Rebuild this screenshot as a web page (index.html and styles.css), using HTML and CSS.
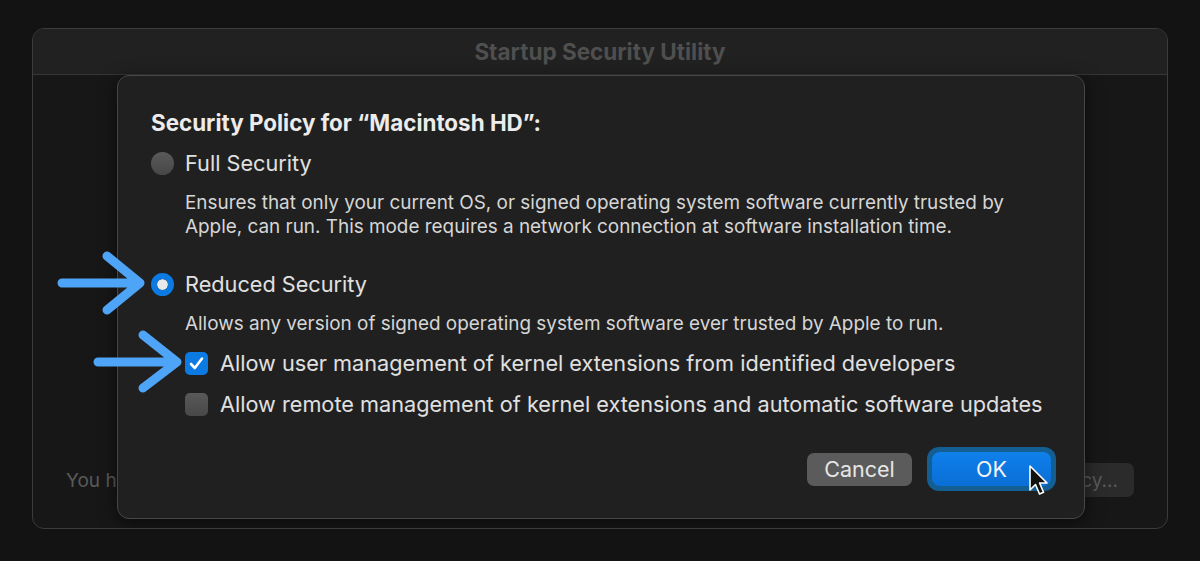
FILE: index.html
```html
<!DOCTYPE html>
<html>
  <head>
    <title>Startup Security Utility</title>
    <link rel="stylesheet" href="styles.css">
  </head>
  <body>
    <div class="screen">
      <div class="window">
        <div class="titlebar">Startup Security Utility</div>
        <div class="window-body">
          <div class="footer">
            <span class="footer-text">You have Reduced Security set.</span>
            <button class="ghost-btn">Policy...</button>
          </div>

          <!-- sheet sits on top of the window content -->
          <div class="sheet">
            <h2 class="sheet-title">Security Policy for “Macintosh HD”:</h2>

            <div class="option">
              <span class="radio"></span>
              <span class="option-label">Full Security</span>
            </div>
            <p class="desc first-desc">Ensures that only your current OS, or signed operating system software currently trusted by<br>Apple, can run. This mode requires a network connection at software installation time.</p>

            <div class="option reduced">
              <span class="radio on"></span>
              <span class="option-label">Reduced Security</span>
            </div>
            <p class="desc">Allows any version of signed operating system software ever trusted by Apple to run.</p>

            <div class="check-row">
              <span class="box on">
                <svg width="23" height="23" viewBox="0 0 23 23"><path d="M6 12 L9.8 16 L17 6.5" fill="none" stroke="#fff" stroke-width="2.6" stroke-linecap="round" stroke-linejoin="round"/></svg>
              </span>
              <span class="check-label">Allow user management of kernel extensions from identified developers</span>
            </div>
            <div class="check-row">
              <span class="box"></span>
              <span class="check-label">Allow remote management of kernel extensions and automatic software updates</span>
            </div>

            <div class="actions">
              <button class="btn cancel">Cancel</button>
              <div class="focus-ring"><button class="btn ok">OK</button></div>
            </div>
          </div>
        </div>
      </div>

      <svg class="marks" width="1200" height="561" viewBox="0 0 1200 561">
        <g fill="none" stroke="#4ea4f6" stroke-width="9" stroke-linecap="round" stroke-linejoin="round">
          <path d="M62 283 H139 M107 256 L140 283 L107 310"/>
          <path d="M98 362 H176 M143 335 L177 362 L143 388"/>
        </g>
      </svg>

      <svg class="cursor" width="24" height="34" viewBox="0 0 24 34">
        <path d="M2 1 L2 25 L7.5 19.5 L11.5 29 L15.5 27.3 L11.6 18 L19 18 Z" fill="#111" stroke="#fff" stroke-width="1.6" stroke-linejoin="round"/>
      </svg>
    </div>
  </body>
</html>
```

FILE: styles.css
```css
body {
  margin: 0;
  background-color: #131313;
  font-family: Inter, "Noto Sans", sans-serif;
}

.screen {
  position: relative;
  width: 1200px;
  height: 561px;
  padding-top: 28px;
  box-sizing: border-box;
}

.window {
  margin-left: 32px;
  width: 1136px;
  height: 501px;
  box-sizing: border-box;
  border: 1px solid #3c3c3c;
  border-radius: 12px;
  background-color: #171717;
  overflow: hidden;
  display: flex;
  flex-direction: column;
}

.titlebar {
  height: 45px;
  flex-shrink: 0;
  background-color: #212121;
  border-bottom: 1px solid #363636;
  color: #4f4f4f;
  font-size: 22.5px;
  font-weight: 700;
  display: flex;
  align-items: center;
  justify-content: center;
}

.window-body {
  position: relative;
  flex: 1;
  display: flex;
  flex-direction: column;
  justify-content: flex-end;
}

.footer {
  display: flex;
  align-items: center;
  justify-content: space-between;
  padding: 0 33px 31px 33px;
}

.footer-text {
  color: #5a5a5a;
  font-size: 19px;
}

.ghost-btn {
  background-color: #2b2b2b;
  color: #5a5a5a;
  font-family: inherit;
  font-size: 19px;
  border: none;
  border-radius: 7px;
  height: 34px;
  padding: 0 16px;
}

.sheet {
  position: absolute;
  top: 0;
  left: 84px;
  width: 968px;
  height: 444px;
  box-sizing: border-box;
  background-color: #202020;
  border: 1px solid #474747;
  border-radius: 12px;
  box-shadow: 0 4px 18px rgba(0, 0, 0, 0.55);
  padding: 35px 28px 0 33px;
}

.sheet-title {
  margin: 0;
  color: #ececec;
  font-size: 22.4px;
  font-weight: 700;
  line-height: 24px;
}

.option {
  display: flex;
  align-items: center;
  height: 28px;
  margin-top: 14px;
}

.option.reduced {
  margin-top: 31px;
}

.radio {
  width: 23px;
  height: 23px;
  border-radius: 50%;
  background: linear-gradient(#5a5a5a, #474747);
  margin-right: 11px;
  flex-shrink: 0;
  box-sizing: border-box;
}

.radio.on {
  border: 6.5px solid #0b7be3;
  background-clip: padding-box;
  background-color: #e9e9e9;
  background-image: none;
}

.option-label {
  color: #e0e0e0;
  font-size: 21.7px;
}

.desc {
  margin: 14px 0 0 34px;
  color: #d6d6d6;
  font-size: 18.9px;
  line-height: 24px;
}

.first-desc {
  margin-top: 14px;
}

.desc + .check-row {
  margin-top: 13px;
}

.check-row {
  display: flex;
  align-items: center;
  height: 28px;
  margin: 13px 0 0 34px;
}

.box {
  width: 23px;
  height: 23px;
  border-radius: 5px;
  background: linear-gradient(#595959, #484848);
  margin-right: 12px;
  flex-shrink: 0;
}

.box.on {
  background: #0b7be3;
}

.box svg {
  display: block;
}

.check-label {
  color: #e0e0e0;
  font-size: 21.7px;
}

.actions {
  display: flex;
  align-items: center;
  justify-content: flex-end;
  gap: 15px;
  margin-top: 29px;
}

.btn {
  font-family: inherit;
  font-size: 21.5px;
  border: none;
  cursor: pointer;
}

.cancel {
  width: 105px;
  height: 33px;
  border-radius: 7px;
  background-color: #5b5b5b;
  color: #e6e6e6;
}

.focus-ring {
  padding: 5px;
  border-radius: 12px;
  background-color: #135e92;
}

.ok {
  display: block;
  width: 119px;
  height: 34px;
  border-radius: 8px;
  background: linear-gradient(#0f80ea, #0a6fd6);
  color: #f4f4f4;
}

.marks {
  position: absolute;
  top: 0;
  left: 0;
  pointer-events: none;
}

.cursor {
  position: absolute;
  left: 1028px;
  top: 465px;
  pointer-events: none;
}
```
